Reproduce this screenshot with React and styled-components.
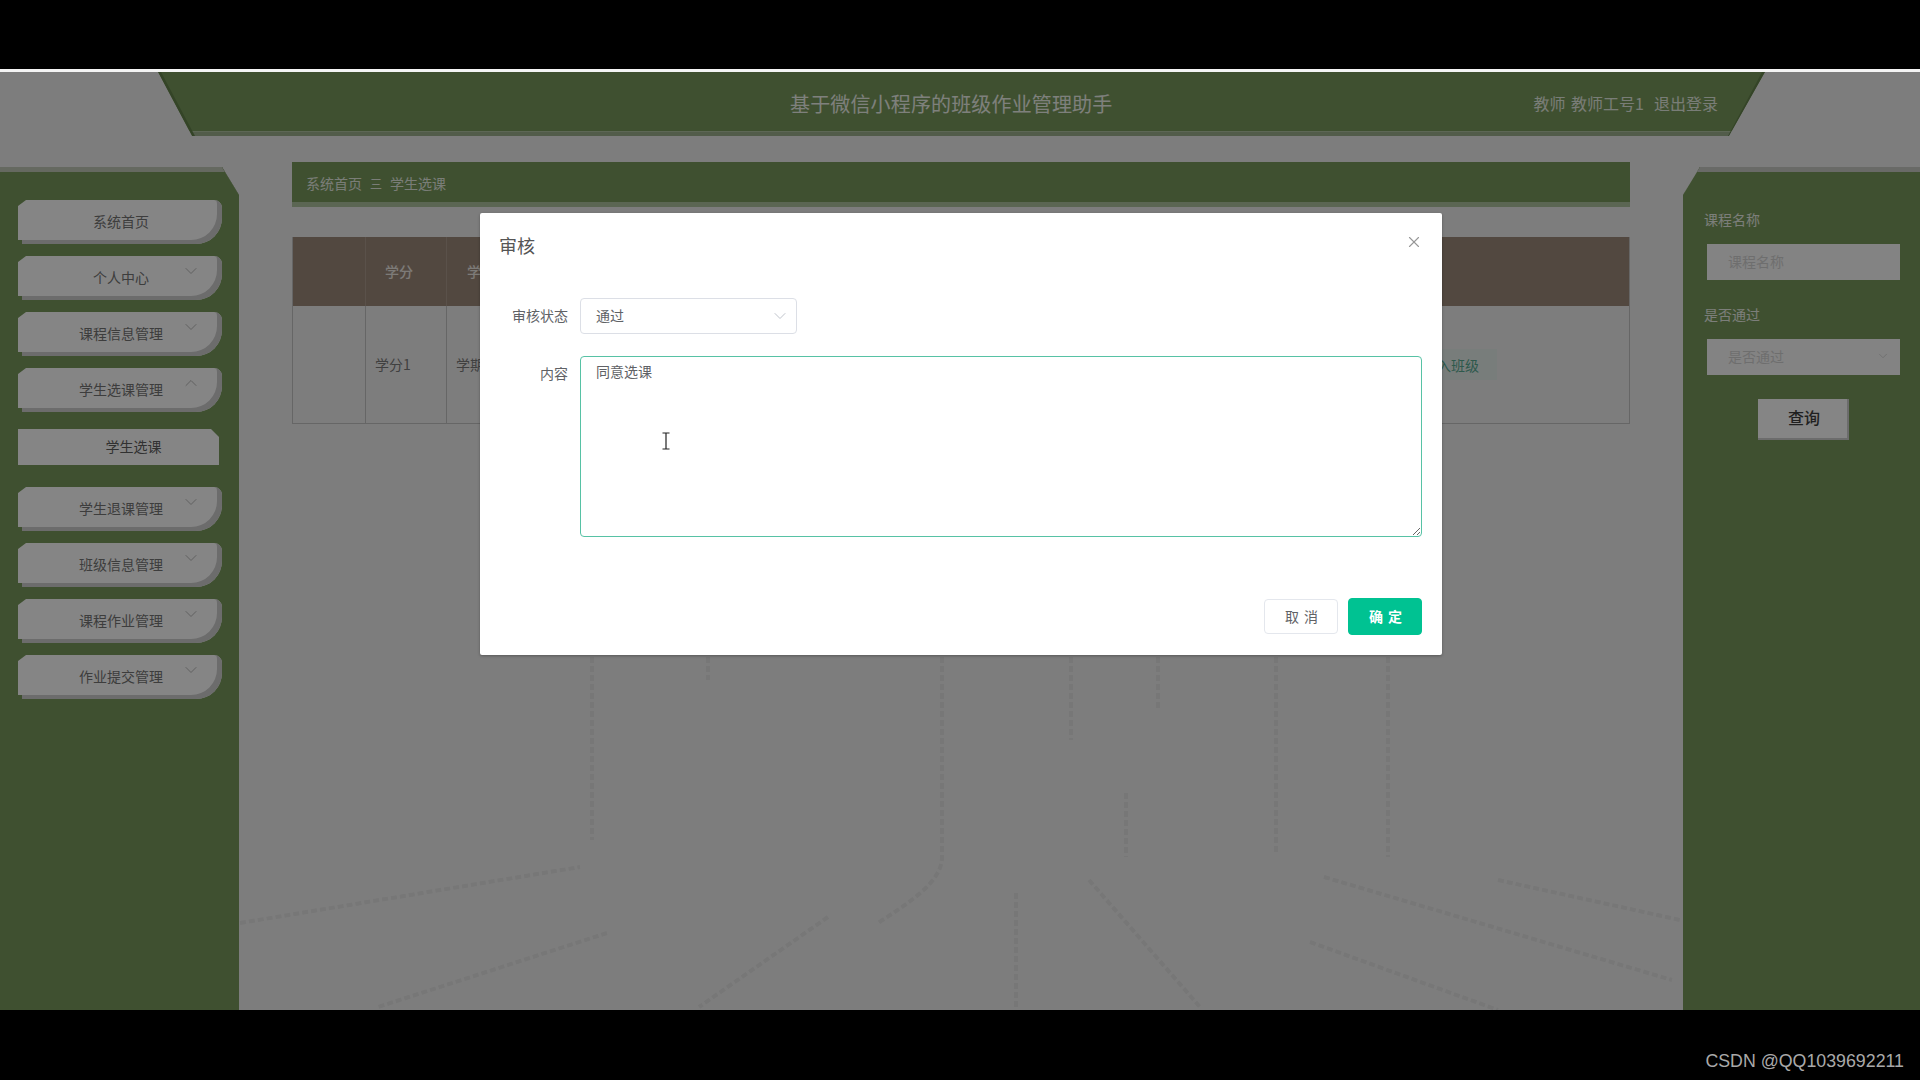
import React from "react";
import styled, { createGlobalStyle } from "styled-components";
import { ChevronDown, ChevronUp, X } from "lucide-react";

const FONT = `"Noto Sans CJK SC", "Liberation Sans", sans-serif`;
const GREEN = "#799a5c";

const Global = createGlobalStyle`
  html, body { margin: 0; padding: 0; background: #000; }
  body { font-family: ${FONT}; font-size: 14px; }
  * { box-sizing: border-box; }
`;

const Screen = styled.div`
  width: 1920px;
  height: 1080px;
  background: #000;
  display: flex;
  flex-direction: column;
  overflow: hidden;
`;

const Letterbox = styled.div`
  flex: 0 0 ${(p) => p.$h}px;
  display: flex;
  justify-content: flex-end;
  align-items: flex-end;
  padding: 0 16px 8px 0;
`;

const Watermark = styled.span`
  font-family: "Liberation Sans", sans-serif;
  font-size: 17.8px;
  line-height: 22px;
  color: #a9a9a9;
`;

const Page = styled.div`
  position: relative;
  flex: 1;
  min-height: 0;
  background: #f0f0f0;
  border-top: 3px solid #f4f4f4;
  display: flex;
  flex-direction: column;
`;

const Backdrop = styled.svg`
  position: absolute;
  inset: 0;
  width: 100%;
  height: 100%;
`;

const Header = styled.header`
  position: relative;
  flex: 0 0 64px;
  margin: 0 155px 0 158px;
  padding: 0 47px 2px 0;
  display: flex;
  align-items: center;
  justify-content: flex-end;
  background: linear-gradient(${GREEN} 0 59px, #b2c6a4 59px 60px, #9db08f 60px);
  clip-path: polygon(0 0, 100% 0, calc(100% - 36px) 100%, 34px 100%);

  &::before,
  &::after {
    content: "";
    position: absolute;
    top: 0;
    bottom: 0;
    width: 38px;
    background: #65824c;
  }
  &::before {
    left: 0;
    clip-path: polygon(0 0, 3px 0, 37px 100%, 34px 100%);
  }
  &::after {
    right: 0;
    clip-path: polygon(100% 0, calc(100% - 3px) 0, 1px 100%, 2px 100%);
  }
`;

const Title = styled.h1`
  position: absolute;
  left: 632px;
  top: 0;
  margin: 0;
  height: 63px;
  display: flex;
  align-items: center;
  font-size: 20px;
  font-weight: 400;
  letter-spacing: 0.15px;
  color: #f2f5ee;
  white-space: nowrap;
`;

const UserLinks = styled.div`
  display: flex;
  gap: 10px;
  font-size: 16px;
  word-spacing: 2px;
  color: #e9efe4;
  white-space: nowrap;
`;

const Body = styled.div`
  position: relative;
  flex: 1;
  min-height: 0;
  display: flex;
  margin-top: 26px;
`;

const SidePanel = styled.aside`
  position: relative;
  flex: 0 0 239px;
  margin-top: 5px;
  padding: 28px 0 0 18px;
  background: ${GREEN};
  border-top: 5px solid #c2c9b8;
  clip-path: polygon(0 0, 222px 0, 100% 28px, 100% 100%, 0 100%);
  display: flex;
  flex-direction: column;
  align-items: flex-start;

  &::after {
    content: "";
    position: absolute;
    right: 0;
    top: -5px;
    width: 17px;
    height: 28px;
    background: #65824c;
    clip-path: polygon(0 0, 3px 0, 100% 80%, 100% 100%);
  }
`;

const NavItem = styled.div`
  position: relative;
  width: 204px;
  height: 44px;
  margin-bottom: 12px;
  padding: 0 0 3px 2px;
  display: flex;
  align-items: center;
  justify-content: center;
  background: #fff;
  color: #757575;
  font-size: 14px;
  border-radius: 4px 8px 26px 0;
  box-shadow: inset -5px -4px 0 #cfcfcf;
  clip-path: polygon(0 6px, 8px 0, 100% 0, 100% 100%, 4px 100%, 4px calc(100% - 4px), 0 calc(100% - 4px));
`;

const NavArrow = styled.span`
  position: absolute;
  right: 21px;
  top: 5px;
  display: flex;
  color: #b9b9b9;
`;

const SubItem = styled.div`
  width: 201px;
  height: 36px;
  margin: 5px 0 22px;
  padding: 0 0 2px 30px;
  display: flex;
  align-items: center;
  justify-content: center;
  background: #fff;
  color: #5f5f5f;
  font-size: 14px;
  clip-path: polygon(0 0, calc(100% - 8px) 0, 100% 8px, 100% 100%, 0 100%);
`;

const Content = styled.main`
  flex: 0 0 1338px;
  margin-left: 53px;
  display: flex;
  flex-direction: column;
`;

const Breadcrumb = styled.nav`
  height: 45px;
  padding: 2px 14px 0;
  display: flex;
  align-items: center;
  gap: 9px;
  background: ${GREEN};
  border-bottom: 5px solid #aec3a0;
  color: #eaf0e5;
  font-size: 14px;
`;

const CrumbDivider = styled.span`
  font-size: 12px;
  margin: 0 -1px;
`;

const Table = styled.div`
  margin-top: 30px;
  display: grid;
  grid-template-columns: 72px 81px 945px 238px;
  grid-template-rows: 69px 117px;
  border: solid #c4c4c4;
  border-width: 0 1px 1px 1px;
`;

const HeadCell = styled.div`
  background: #9e8a7b;
  border-left: ${(p) => (p.$first ? "none" : "1px solid #ad9c8f")};
  display: flex;
  align-items: center;
  justify-content: ${(p) => (p.$left ? "flex-start" : "center")};
  padding: ${(p) => (p.$left ? "0 0 2px 20px" : "0 14px 2px 0")};
  color: #f0ebe6;
  font-size: 14px;
  font-weight: 500;
`;

const BodyCell = styled.div`
  border-left: ${(p) => (p.$first ? "none" : "1px solid #c4c4c4")};
  display: flex;
  align-items: center;
  padding: 0 0 2px 9px;
  color: #7b7b7b;
  font-size: 14px;
`;

const ActionTag = styled.span`
  margin: 2px 0 0 4px;
  padding: 0 18px;
  height: 31px;
  display: flex;
  align-items: center;
  background: #e6f0ec;
  color: #58ab93;
  font-size: 14px;
  white-space: nowrap;
`;

const FilterPanel = styled.aside`
  position: relative;
  flex: 0 0 237px;
  margin: 5px 0 0 53px;
  padding: 38px 20px 0 21px;
  background: ${GREEN};
  border-top: 5px solid #c9ccc5;
  clip-path: polygon(17px 0, 100% 0, 100% 100%, 0 100%, 0 28px);
  display: flex;
  flex-direction: column;

  &::after {
    content: "";
    position: absolute;
    left: 0;
    top: -5px;
    width: 17px;
    height: 28px;
    background: #65824c;
    clip-path: polygon(100% 0, calc(100% - 3px) 0, 0 100%, 0 80%);
  }
`;

const FilterLabel = styled.label`
  height: 20px;
  padding-bottom: 2px;
  display: flex;
  align-items: center;
  color: #eef2ea;
  font-size: 14px;
`;

const FilterField = styled.div`
  width: 193px;
  height: 36px;
  margin: 14px 0 25px 3px;
  padding: 0 10px 2px 21px;
  display: flex;
  align-items: center;
  justify-content: space-between;
  background: #fbfbfb;
  color: #d4d4d4;
  font-size: 14px;
`;

const QueryButton = styled.button`
  align-self: flex-start;
  width: 91px;
  height: 41px;
  margin: -1px 0 0 54px;
  padding: 0 0 5px 1px;
  border: 0;
  background: #fff;
  color: #3f3f3f;
  font: 500 16px ${FONT};
  box-shadow: inset -2px -2px 0 #cfcfcf;
`;

const Overlay = styled.div`
  position: absolute;
  inset: 0;
  background: rgba(0, 0, 0, 0.48);
`;

const Dialog = styled.section`
  position: absolute;
  left: 480px;
  top: 141px;
  width: 962px;
  height: 442px;
  padding: 0 20px 20px;
  display: flex;
  flex-direction: column;
  background: #fff;
  border-radius: 2px;
  box-shadow: 0 1px 3px rgba(0, 0, 0, 0.3);
`;

const DialogHead = styled.div`
  height: 85px;
  padding-top: 18px;
  margin-left: -1px;
  font-size: 18px;
  line-height: 28px;
  color: #555;
`;

const CloseIcon = styled.span`
  position: absolute;
  right: 19px;
  top: 20px;
  display: flex;
  color: #979797;
`;

const FormRow = styled.div`
  display: flex;
  align-items: flex-start;
  margin-bottom: 22px;
`;

const FormLabel = styled.label`
  flex: 0 0 68px;
  margin-right: 12px;
  text-align: right;
  font-size: 14px;
  line-height: 34px;
  color: #606266;
  white-space: nowrap;
`;

const SelectBox = styled.div`
  width: 217px;
  height: 36px;
  padding: 0 6px 2px 15px;
  display: flex;
  align-items: center;
  justify-content: space-between;
  border: 1px solid #dcdfe6;
  border-radius: 4px;
  color: #606266;
  font-size: 14px;
`;

const SelectArrow = styled.span`
  display: flex;
  margin-top: 2px;
  color: #c0c4cc;
`;

const TextArea = styled.textarea`
  flex: 1;
  height: 181px;
  padding: 4px 15px;
  border: 1px solid #57c2a5;
  border-radius: 4px;
  outline: none;
  background: #fff;
  color: #606266;
  font: 14px/20px ${FONT};
`;

const TextCaret = styled.svg`
  position: absolute;
  left: 181px;
  top: 219px;
`;

const DialogFoot = styled.div`
  margin-top: auto;
  display: flex;
  justify-content: flex-end;
  align-items: center;
  gap: 10px;
`;

const DialogButton = styled.button`
  width: 74px;
  height: ${(p) => (p.$primary ? 37 : 35)}px;
  padding: 0 0 2px 2px;
  border: 1px solid ${(p) => (p.$primary ? "#00c292" : "#e4e7ed")};
  border-radius: 4px;
  background: ${(p) => (p.$primary ? "#00c292" : "#fff")};
  color: ${(p) => (p.$primary ? "#fff" : "#606266")};
  font: ${(p) => (p.$primary ? 700 : 400)} 14px ${FONT};
  letter-spacing: 1px;
`;

const menu = [
  { label: "系统首页" },
  { label: "个人中心", arrow: "down" },
  { label: "课程信息管理", arrow: "down" },
  { label: "学生选课管理", arrow: "up", children: ["学生选课"] },
  { label: "学生退课管理", arrow: "down" },
  { label: "班级信息管理", arrow: "down" },
  { label: "课程作业管理", arrow: "down" },
  { label: "作业提交管理", arrow: "down" },
];

/* Faint road markings printed on the page background */
const roadLines = [
  "M592 585V768", "M708 585V608", "M942 585V785C942 810 910 830 878 851",
  "M1071 585V668", "M1158 585V638", "M1276 585V781", "M1388 585V785",
  "M1126 721V785", "M240 851L580 795", "M607 861L378 935", "M828 845L699 935",
  "M1016 821V938", "M1089 808L1200 935", "M1324 805L1672 908", "M1498 808L1680 848",
  "M1310 870L1498 938",
];

export default function App() {
  return (
    <Screen>
      <Global />
      <Letterbox $h={69} />
      <Page>
        <Backdrop viewBox="0 0 1920 938" fill="none">
          {roadLines.map((d) => (
            <path key={d} d={d} stroke="#e4e4e4" strokeWidth="4" strokeDasharray="6 3" />
          ))}
        </Backdrop>
        <Header>
          <Title>基于微信小程序的班级作业管理助手</Title>
          <UserLinks>
            <span>教师 教师工号1</span>
            <span>退出登录</span>
          </UserLinks>
        </Header>
        <Body>
          <SidePanel>
            {menu.map((item) => (
              <React.Fragment key={item.label}>
                <NavItem>
                  {item.label}
                  {item.arrow && (
                    <NavArrow>
                      {item.arrow === "up" ? (
                        <ChevronUp size={20} strokeWidth={1.2} />
                      ) : (
                        <ChevronDown size={20} strokeWidth={1.2} />
                      )}
                    </NavArrow>
                  )}
                </NavItem>
                {item.children?.map((c) => <SubItem key={c}>{c}</SubItem>)}
              </React.Fragment>
            ))}
          </SidePanel>
          <Content>
            <Breadcrumb>
              <span>系统首页</span>
              <CrumbDivider>三</CrumbDivider>
              <span>学生选课</span>
            </Breadcrumb>
            <Table>
              <HeadCell $first />
              <HeadCell>学分</HeadCell>
              <HeadCell $left>学期</HeadCell>
              <HeadCell />
              <BodyCell $first />
              <BodyCell>学分1</BodyCell>
              <BodyCell>学期1</BodyCell>
              <BodyCell>
                <ActionTag>加入班级</ActionTag>
              </BodyCell>
            </Table>
          </Content>
          <FilterPanel>
            <FilterLabel>课程名称</FilterLabel>
            <FilterField>课程名称</FilterField>
            <FilterLabel>是否通过</FilterLabel>
            <FilterField>
              是否通过
              <ChevronDown size={14} strokeWidth={1.5} />
            </FilterField>
            <QueryButton>查询</QueryButton>
          </FilterPanel>
        </Body>
        <Overlay>
          <Dialog>
            <DialogHead>审核</DialogHead>
            <CloseIcon>
              <X size={18} strokeWidth={1.5} />
            </CloseIcon>
            <FormRow>
              <FormLabel>审核状态</FormLabel>
              <SelectBox>
                通过
                <SelectArrow>
                  <ChevronDown size={20} strokeWidth={1.2} />
                </SelectArrow>
              </SelectBox>
            </FormRow>
            <FormRow>
              <FormLabel>内容</FormLabel>
              <TextArea defaultValue="同意选课" />
            </FormRow>
            <TextCaret width="10" height="18" viewBox="0 0 10 18" fill="none" stroke="#222" strokeWidth="1.2">
              <path d="M1.5 1H8.5M5 1V17M1.5 17H8.5" />
            </TextCaret>
            <DialogFoot>
              <DialogButton>取 消</DialogButton>
              <DialogButton $primary>确 定</DialogButton>
            </DialogFoot>
          </Dialog>
        </Overlay>
      </Page>
      <Letterbox $h={70}>
        <Watermark>CSDN @QQ1039692211</Watermark>
      </Letterbox>
    </Screen>
  );
}
